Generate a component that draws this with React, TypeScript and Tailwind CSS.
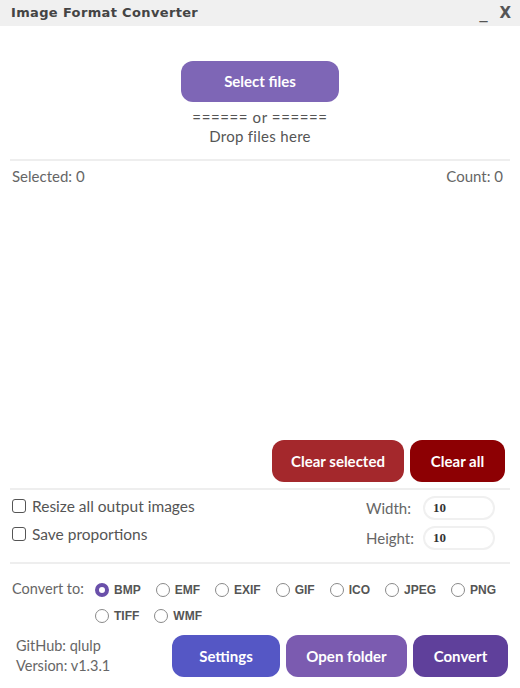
import React, { useState } from 'react';

const formats = ['BMP', 'EMF', 'EXIF', 'GIF', 'ICO', 'JPEG', 'PNG', 'TIFF', 'WMF'];

const ui = { fontFamily: 'Lato, "Noto Sans", sans-serif' };

const Checkbox: React.FC<{ label: string }> = ({ label }) => (
  <label className="flex items-center gap-[6px] text-[15.5px] leading-[20px] text-[#555]">
    <span className="h-[14px] w-[14px] rounded-[3px] border border-[#555] bg-white" />
    <span>{label}</span>
  </label>
);

const SizeInput: React.FC<{ label: string; value: string }> = ({ label, value }) => (
  <div className="flex items-center justify-end">
    <span className="w-[57px] text-[15px] text-[#666]">{label}</span>
    <div
      className="flex h-[24px] w-[72px] items-center rounded-full border-2 border-[#f0f0f0] pl-[8px] text-[13px] font-bold text-[#333]"
      style={{ fontFamily: '"Liberation Serif", serif' }}
    >
      {value}
    </div>
  </div>
);

const Radio: React.FC<{ label: string; checked: boolean; onClick: () => void }> = ({
  label,
  checked,
  onClick,
}) => (
  <button onClick={onClick} className="flex items-center gap-[5px]">
    {checked ? (
      <span className="h-[14px] w-[14px] rounded-full border-[4px] border-[#6a50aa] bg-white" />
    ) : (
      <span className="h-[14px] w-[14px] rounded-full border border-[#8a8a8a] bg-white" />
    )}
    <span
      className="text-[12px] font-bold text-[#555]"
      style={{ fontFamily: '"Liberation Sans", Arial, sans-serif' }}
    >
      {label}
    </span>
  </button>
);

export default function App() {
  const [format, setFormat] = useState('BMP');

  return (
    <div className="flex h-[688px] w-[520px] flex-col bg-white" style={ui}>
      {/* Title bar */}
      <div className="flex h-[26px] items-center justify-between bg-[#f0f0f0] pl-[11px] pr-[9px]">
        <span
          className="text-[13px] font-bold tracking-[0.35px] text-[#444]"
          style={{ fontFamily: '"DejaVu Sans", Verdana, sans-serif' }}
        >
          Image Format Converter
        </span>
        <div className="flex items-center gap-[12px] text-[#555]" style={{ fontFamily: '"DejaVu Sans", sans-serif' }}>
          <span className="text-[16px] leading-none">_</span>
          <span className="text-[15px] font-bold leading-none">X</span>
        </div>
      </div>

      <div className="flex flex-1 flex-col px-[10px]">
        {/* Drop zone */}
        <div className="flex flex-col items-center pt-[35px]">
          <button className="h-[41px] w-[158px] rounded-[12px] bg-[#7e66b6] text-[15px] font-bold text-white">
            Select files
          </button>
          <div className="mt-[6px] text-[15px] leading-[19px] tracking-[0.6px] text-[#555]">====== or ======</div>
          <div className="text-[15px] leading-[19px] tracking-[0.3px] text-[#555]">Drop files here</div>
        </div>

        <div className="mt-[13px] h-[2px] bg-[#eeeeee]" />

        <div className="flex justify-between pl-[2px] pr-[7px] pt-[5px] text-[15px] leading-[20px] text-[#666]">
          <span>Selected: 0</span>
          <span>Count: 0</span>
        </div>

        {/* File list area */}
        <div className="flex-1" />

        <div className="flex justify-end gap-[6px] pr-[5px] pb-[6px]">
          <button className="h-[42px] w-[132px] rounded-[12px] bg-[#a4282c] text-[15px] font-bold text-white">
            Clear selected
          </button>
          <button className="h-[42px] w-[95px] rounded-[12px] bg-[#8d0003] text-[15px] font-bold text-white">
            Clear all
          </button>
        </div>

        <div className="h-[2px] bg-[#eeeeee]" />

        {/* Resize options */}
        <div className="flex justify-between pt-[6px] pb-[12px] pl-[2px] pr-[15px]">
          <div className="flex flex-col gap-[8px]">
            <Checkbox label="Resize all output images" />
            <Checkbox label="Save proportions" />
          </div>
          <div className="flex flex-col gap-[6px]">
            <SizeInput label="Width:" value="10" />
            <SizeInput label="Height:" value="10" />
          </div>
        </div>

        <div className="h-[2px] bg-[#eeeeee]" />

        {/* Format picker */}
        <div className="flex pt-[15px] pl-[2px]">
          <span className="w-[83px] text-[14.5px] leading-[20px] text-[#666]">Convert to:</span>
          <div className="flex flex-1 flex-wrap gap-x-[15px] gap-y-[8px] pt-[2px]">
            {formats.map((f) => (
              <Radio key={f} label={f} checked={format === f} onClick={() => setFormat(f)} />
            ))}
          </div>
        </div>

        {/* Footer */}
        <div className="mt-[10px] mb-[11px] flex items-center justify-between">
          <div className="pl-[6px] text-[14.5px] leading-[20px] text-[#666]">
            <div>GitHub: qlulp</div>
            <div>Version: v1.3.1</div>
          </div>
          <div className="flex gap-[6px] pr-[2px]">
            <button className="h-[42px] w-[108px] rounded-[12px] bg-[#5557c5] text-[15px] font-bold text-white">
              Settings
            </button>
            <button className="h-[42px] w-[121px] rounded-[12px] bg-[#7b5bb0] text-[15px] font-bold text-white">
              Open folder
            </button>
            <button className="h-[42px] w-[95px] rounded-[12px] bg-[#5f409b] text-[15px] font-bold text-white">
              Convert
            </button>
          </div>
        </div>
      </div>
    </div>
  );
}
